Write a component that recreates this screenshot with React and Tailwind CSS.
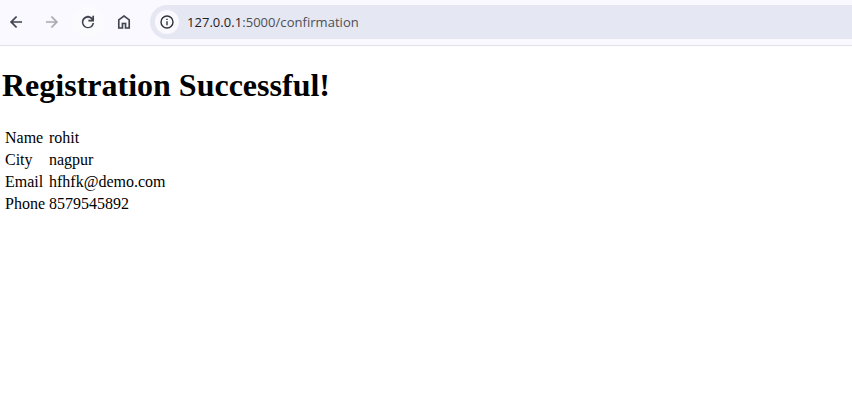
const rows = [
  ['Name', 'rohit'],
  ['City', 'nagpur'],
  ['Email', 'hfhfk@demo.com'],
  ['Phone', '8579545892'],
];

function Icon({ d, className }) {
  return (
    <svg viewBox="0 0 24 24" fill="currentColor" stroke="currentColor" strokeWidth="0.12" className={className} aria-hidden="true">
      <path d={d} />
    </svg>
  );
}

function Toolbar() {
  return (
    <header className="flex h-[46px] items-start border-b border-[#e1e1e8] bg-[#f9f9ff] pt-[5px]">
      <nav className="flex h-[34px] w-[150px] shrink-0 items-center gap-[2px] text-[#42454f]">
        <button aria-label="Back" className="flex h-[34px] w-[34px] items-center justify-center -ml-px">
          <Icon className="size-[18px]" d="M20 10.9H8.1l5.5-5.5L12 3.9 3.9 12l8.1 8.1 1.6-1.5-5.5-5.5H20z" />
        </button>
        <button aria-label="Forward" className="flex h-[34px] w-[34px] items-center justify-center text-[#aaaab1]">
          <Icon className="size-[18px]" d="M4 10.9h11.9l-5.5-5.5L12 3.9l8.1 8.1-8.1 8.1-1.6-1.5 5.5-5.5H4z" />
        </button>
        <button aria-label="Reload" className="flex h-[34px] w-[34px] items-center justify-center rounded-full bg-[#fbfbfd]">
          <Icon className="size-[18px]" d="M12 20.2a8.2 8.2 0 1 1 5.9-13.9V3.8H20v7.4h-7.4V9h4.3a6.1 6.1 0 1 0 1.1 4.3h2.1a8.2 8.2 0 0 1-8.1 6.9z" />
        </button>
        <button aria-label="Home" className="flex h-[34px] w-[34px] items-center justify-center">
          <Icon className="size-[18px]" d="M6.1 18.9h2.8v-6h6.2v6h2.8V9.8L12 5.3 6.1 9.8zM4 21V8.8l8-6.1 8 6.1V21h-7v-6h-2v6z" />
        </button>
      </nav>
      <div className="flex h-[34px] flex-1 items-center rounded-l-full bg-[#e5e7f2] pl-[5px]">
        <div className="flex size-6 items-center justify-center rounded-full bg-[#f9f9ff]">
          <svg viewBox="0 0 14 14" className="size-[14px] text-[#303238]" fill="none" stroke="currentColor" aria-hidden="true">
            <circle cx="7" cy="7" r="6" strokeWidth="1.4" />
            <path d="M7 6.2v4M7 3.7v1.4" strokeWidth="1.4" />
          </svg>
        </div>
        <p className="ml-[8px] whitespace-nowrap font-['Open_Sans',sans-serif] text-[13px] leading-5 tracking-[0.04px] text-[#4c4e56]">
          <span className="text-[#1f2025]">127.0.0.1</span>:5000/confirmation
        </p>
      </div>
    </header>
  );
}

export default function App() {
  return (
    <div className="h-[411px] w-full overflow-hidden bg-white text-black">
      <Toolbar />
      <main className="px-[2px] pt-[21px] font-['Liberation_Serif',serif]">
        <h1 className="text-[32px] font-bold leading-[37px]">Registration Successful!</h1>
        <table className="mt-[22px] border-separate border-spacing-[2px] text-[16px] leading-[18px]">
          <tbody>
            {rows.map(([label, value]) => (
              <tr key={label}>
                <td className="p-px">{label}</td>
                <td className="p-px">{value}</td>
              </tr>
            ))}
          </tbody>
        </table>
      </main>
    </div>
  );
}
